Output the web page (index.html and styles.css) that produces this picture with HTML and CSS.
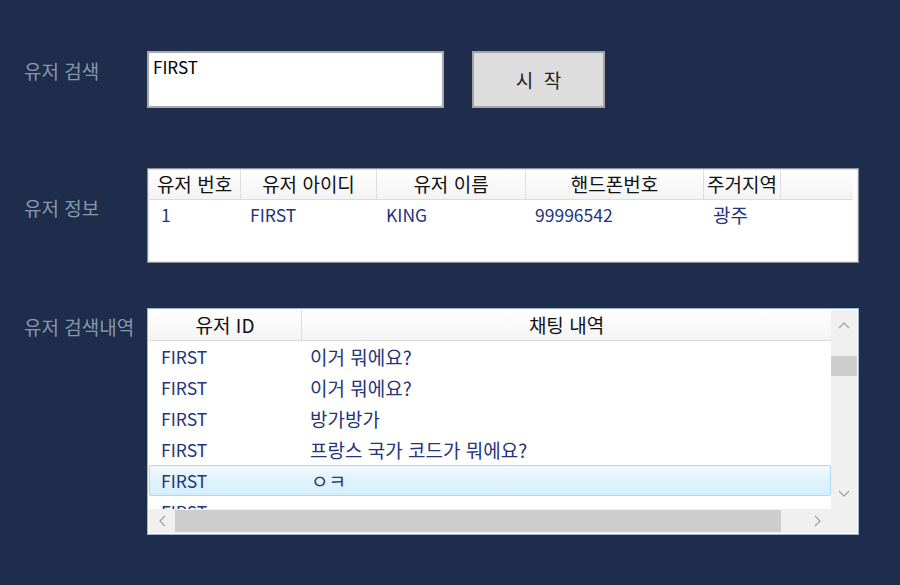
FILE: index.html
```html
<!DOCTYPE html>
<html lang="ko">
<head>
<meta charset="utf-8">
<link rel="stylesheet" href="styles.css">
</head>
<body>
<div class="page">
  <div class="row row-search">
    <div class="label">유저 검색</div>
    <div class="textbox">FIRST</div>
    <button class="btn">시&nbsp;&nbsp;작</button>
  </div>

  <div class="row row-info">
    <div class="label">유저 정보</div>
    <div class="grid1">
      <div class="g1-head">
        <div class="hc c1">유저 번호</div>
        <div class="hc c2">유저 아이디</div>
        <div class="hc c3">유저 이름</div>
        <div class="hc c4">핸드폰번호</div>
        <div class="hc c5">주거지역</div>
        <div class="hc-rest"></div>
      </div>
      <div class="g1-row">
        <div class="dc lat c1 first">1</div>
        <div class="dc lat c2">FIRST</div>
        <div class="dc lat c3">KING</div>
        <div class="dc lat c4">99996542</div>
        <div class="dc c5">광주</div>
      </div>
    </div>
  </div>

  <div class="row row-hist">
    <div class="label">유저 검색내역</div>
    <div class="grid2">
      <div class="g2-view">
        <div class="g2-head">
          <div class="hc k1">유저 ID</div>
          <div class="hc k2">채팅 내역</div>
        </div>
        <div class="g2-body">
          <div class="g2-row"><div class="k1 dc lat">FIRST</div><div class="k2 dc">이거 뭐에요?</div></div>
          <div class="g2-row"><div class="k1 dc lat">FIRST</div><div class="k2 dc">이거 뭐에요?</div></div>
          <div class="g2-row"><div class="k1 dc lat">FIRST</div><div class="k2 dc">방가방가</div></div>
          <div class="g2-row"><div class="k1 dc lat">FIRST</div><div class="k2 dc">프랑스 국가 코드가 뭐에요?</div></div>
          <div class="g2-row sel"><div class="k1 dc lat">FIRST</div><div class="k2 dc">ㅇㅋ</div></div>
          <div class="g2-row"><div class="k1 dc lat">FIRST</div><div class="k2 dc"></div></div>
        </div>
      </div>
      <div class="vscroll">
        <div class="arrow">
          <svg width="12" height="8" viewBox="0 0 12 8"><path d="M1 7 L6 2 L11 7" fill="none" stroke="#a6a6a6" stroke-width="1.4"/></svg>
        </div>
        <div class="vtrack"><div class="vthumb"></div></div>
        <div class="arrow">
          <svg width="12" height="8" viewBox="0 0 12 8"><path d="M1 1 L6 6 L11 1" fill="none" stroke="#a6a6a6" stroke-width="1.4"/></svg>
        </div>
      </div>
      <div class="hscroll">
        <div class="harrow">
          <svg width="8" height="12" viewBox="0 0 8 12"><path d="M7 1 L2 6 L7 11" fill="none" stroke="#a6a6a6" stroke-width="1.4"/></svg>
        </div>
        <div class="htrack"><div class="hthumb"></div></div>
        <div class="harrow right">
          <svg width="8" height="12" viewBox="0 0 8 12"><path d="M1 1 L6 6 L1 11" fill="none" stroke="#a6a6a6" stroke-width="1.4"/></svg>
        </div>
      </div>
      <div class="corner"></div>
    </div>
  </div>
</div>
</body>
</html>
```

FILE: styles.css
```css
html, body {
  margin: 0;
  padding: 0;
  background: #1e2d4b;
  width: 900px;
  height: 585px;
  overflow: hidden;
  font-family: "Noto Sans CJK KR", "Noto Sans", sans-serif;
}

.page {
  padding: 51px 0 0 24px;
  display: flex;
  flex-direction: column;
}

.row {
  display: flex;
  align-items: flex-start;
}

.label {
  width: 123px;
  color: #8797ad;
  font-size: 19px;
  line-height: 24px;
}

.row-search .label { padding-top: 8px; }
.row-info { margin-top: 60px; }
.row-info .label { padding-top: 28px; }
.row-hist { margin-top: 45px; }
.row-hist .label { padding-top: 7px; }

.textbox {
  box-sizing: border-box;
  width: 297px;
  height: 57px;
  background: #fff;
  border: 2px solid #a8a8a8;
  padding: 3px 4px;
  font-size: 17px;
  line-height: 22px;
  color: #000;
}

.btn {
  box-sizing: border-box;
  margin-left: 28px;
  width: 133px;
  height: 57px;
  background: #dddddd;
  border: 2px solid #a3a3a3;
  font-family: inherit;
  font-size: 19px;
  color: #222;
  padding: 0;
}

/* grid 1 */
.grid1 {
  box-sizing: border-box;
  width: 712px;
  height: 95px;
  background: #fff;
  border: 1px solid #8a8f98;
  box-shadow: inset 0 0 0 1px #e3e3e3;
  padding: 1px;
}

.g1-head {
  display: flex;
  height: 29px;
  background: linear-gradient(#ffffff, #f3f3f3);
  border-bottom: 1px solid #dcdcdc;
  margin-right: 4px;
}

.hc {
  box-sizing: border-box;
  font-size: 19px;
  line-height: 28px;
  color: #111;
  text-align: center;
  border-right: 1px solid #dedede;
  white-space: nowrap;
}

.hc-rest { flex: 1; }

.c1 { width: 92px; }
.c2 { width: 136px; }
.c3 { width: 149px; }
.c4 { width: 178px; }
.c5 { width: 77px; }

.g1-row {
  display: flex;
  height: 30px;
}

.dc {
  box-sizing: border-box;
  font-size: 19px;
  line-height: 30px;
  color: #24357a;
  padding-left: 9px;
  white-space: nowrap;
}

.dc.lat { font-size: 17.5px; }

.dc.first { padding-left: 12px; }

/* grid 2 */
.grid2 {
  box-sizing: border-box;
  width: 712px;
  height: 227px;
  background: #fff;
  border: 1px solid #9ab3cf;
  padding: 1px;
  display: grid;
  grid-template-columns: 1fr 26px;
  grid-template-rows: 1fr 24px;
}

.g2-view {
  overflow: hidden;
}

.g2-head {
  display: flex;
  height: 30px;
  background: linear-gradient(#ffffff, #f4f4f4);
  border-bottom: 1px solid #dcdcdc;
}

.g2-head .hc { line-height: 30px; }

.k1 { width: 153px; }
.k2 { flex: 1; }
.g2-head .k2 { border-right: none; }

.g2-row {
  display: flex;
  height: 31px;
  box-sizing: border-box;
}

.g2-row .dc {
  line-height: 31px;
  padding-left: 12px;
}

.g2-row .k2.dc { padding-left: 8px; }

.g2-row.sel {
  background: linear-gradient(#f1f9fe, #e0f3fd 50%, #d6effc);
  border: 1px solid #a9d9f5;
  border-radius: 2px;
}

.g2-row.sel .dc { line-height: 29px; padding-left: 11px; }
.g2-row.sel .k2.dc { padding-left: 8px; }

.vscroll {
  background: #f0f0f0;
  display: flex;
  flex-direction: column;
}

.arrow {
  height: 30px;
  display: flex;
  align-items: center;
  justify-content: center;
}

.vtrack {
  flex: 1;
  padding-top: 16px;
}

.vthumb {
  height: 20px;
  background: #cdcdcd;
}

.hscroll {
  background: #f0f0f0;
  display: flex;
}

.harrow {
  width: 26px;
  display: flex;
  align-items: center;
  justify-content: center;
}

.htrack {
  flex: 1;
  display: flex;
  padding-right: 24px;
}

.hthumb {
  flex: 1;
  margin: 1px 0;
  background: #cdcdcd;
}

.corner { background: #f0f0f0; }
```
